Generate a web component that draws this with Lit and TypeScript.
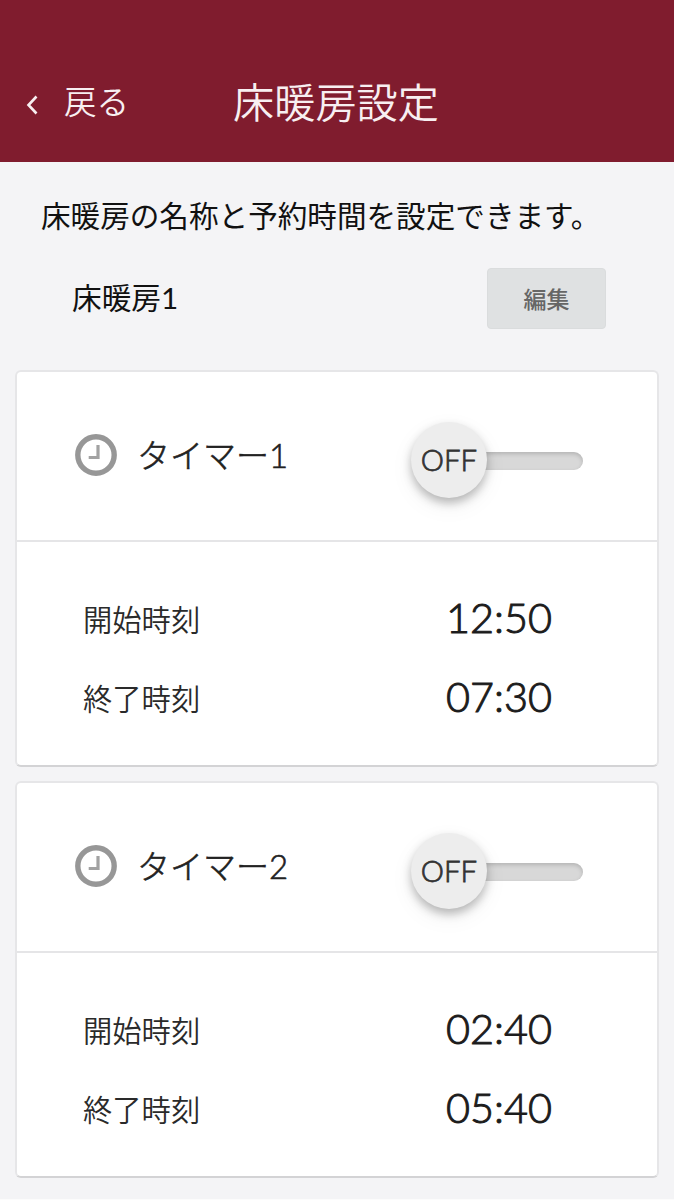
import { LitElement, html, css } from "lit";
import { customElement, property } from "lit/decorators.js";

@customElement("timer-card")
class TimerCard extends LitElement {
  @property() name = "";
  @property() start = "";
  @property() end = "";

  static styles = css`
    :host {
      display: block;
      box-sizing: border-box;
      height: 397px;
      background: #fff;
      border: 2px solid #e6e6e8;
      border-bottom-color: #d3d3d5;
      border-radius: 6px;
    }
    .head {
      box-sizing: border-box;
      height: 170px;
      border-bottom: 2px solid #e5e5e7;
      display: flex;
      align-items: center;
      padding: 0 74px 2px 58px;
    }
    .clock {
      width: 42px;
      height: 42px;
      flex: none;
    }
    .name {
      font-size: 33px;
      line-height: 48px;
      padding: 0 0 1px 20px;
      flex: 1;
      color: #222;
      font-weight: 300;
      -webkit-text-stroke: 0.6px #222;
      white-space: nowrap;
    }
    .switch {
      display: flex;
      align-items: center;
      margin-top: 10px;
    }
    .knob {
      box-sizing: border-box;
      width: 76px;
      height: 76px;
      padding-bottom: 2px;
      border-radius: 50%;
      background: #ededed;
      box-shadow: 0 5px 10px rgba(0, 0, 0, 0.26), 0 8px 24px rgba(0, 0, 0, 0.06);
      display: flex;
      align-items: center;
      justify-content: center;
      font-size: 29.3px;
      font-weight: 300;
      -webkit-text-stroke: 0.8px #333;
      color: #333;
      z-index: 1;
    }
    .track {
      width: 106px;
      height: 18px;
      margin: 1px 0 0 -10px;
      border-radius: 9px;
      background: #d8d8d8;
      box-shadow: inset 0 2px 4px rgba(0, 0, 0, 0.17);
    }
    .rows {
      padding: 36px 105px 0 66px;
    }
    .row {
      height: 79px;
      display: flex;
      align-items: center;
      justify-content: space-between;
    }
    .label {
      font-size: 29.3px;
      font-weight: 350;
      color: #2a2a2a;
    }
    .time {
      font-size: 41.4px;
      padding-bottom: 2px;
      color: #1c1c1c;
      font-weight: 300;
      -webkit-text-stroke: 1px #1c1c1c;
    }
  `;

  render() {
    return html`
      <div class="head">
        <svg class="clock" viewBox="0 0 42 42" fill="none">
          <circle cx="21" cy="21" r="18.2" stroke="#979797" stroke-width="5.4" />
          <path d="M23 11V23.5H13.7" stroke="#a2a2a2" stroke-width="3.2" />
        </svg>
        <div class="name">${this.name}</div>
        <div class="switch">
          <div class="knob">OFF</div>
          <div class="track"></div>
        </div>
      </div>
      <div class="rows">
        <div class="row"><span class="label">開始時刻</span><span class="time">${this.start}</span></div>
        <div class="row"><span class="label">終了時刻</span><span class="time">${this.end}</span></div>
      </div>
    `;
  }
}

@customElement("app-root")
class AppRoot extends LitElement {
  static styles = css`
    :host {
      display: block;
      height: 1200px;
      overflow: hidden;
      box-sizing: border-box;
      background: #f4f4f6;
      border-bottom: 1px solid #fcfcfc;
      font-family: Lato, "Noto Sans CJK JP", sans-serif;
      color: #111;
    }
    .bar {
      box-sizing: border-box;
      height: 162px;
      padding: 41px 0 0 26px;
      background: #801c2e;
      color: #f8eff1;
      display: grid;
      grid-template-columns: 207px 1fr;
      align-items: center;
      font-weight: 350;
    }
    .back {
      display: flex;
      align-items: center;
      gap: 26px;
      font-size: 32.5px;
      line-height: 48px;
    }
    .chevron {
      width: 12px;
      height: 20px;
      margin-top: 7px;
    }
    .title {
      font-size: 41.2px;
      line-height: 60px;
    }
    .intro {
      font-size: 29.6px;
      line-height: 44px;
      padding: 32px 0 0 41px;
      white-space: nowrap;
    }
    .room {
      display: flex;
      align-items: center;
      justify-content: space-between;
      padding: 30px 68px 0 72px;
      height: 60px;
      font-size: 29.7px;
    }
    .room-name {
      padding-bottom: 4px;
    }
    .edit {
      box-sizing: border-box;
      width: 119px;
      height: 61px;
      border: 1px solid #dadcdd;
      border-radius: 4px;
      background: #dfe1e2;
      color: #666;
      font: 500 23px Lato, "Noto Sans CJK JP", sans-serif;
      padding: 0;
    }
    .cards {
      display: flex;
      flex-direction: column;
      gap: 14px;
      padding: 42px 15px 0;
    }
  `;

  render() {
    return html`
      <header class="bar">
        <div class="back">
          <svg class="chevron" viewBox="0 0 12 20" fill="none">
            <path d="M10.5 1.5L2.5 10L10.5 18.5" stroke="#f8eff1" stroke-width="2.6" />
          </svg>
          <span>戻る</span>
        </div>
        <div class="title">床暖房設定</div>
      </header>
      <div class="intro">床暖房の名称と予約時間を設定できます。</div>
      <div class="room">
        <span class="room-name">床暖房1</span>
        <button class="edit">編集</button>
      </div>
      <div class="cards">
        <timer-card name="タイマー1" start="12:50" end="07:30"></timer-card>
        <timer-card name="タイマー2" start="02:40" end="05:40"></timer-card>
      </div>
    `;
  }
}
